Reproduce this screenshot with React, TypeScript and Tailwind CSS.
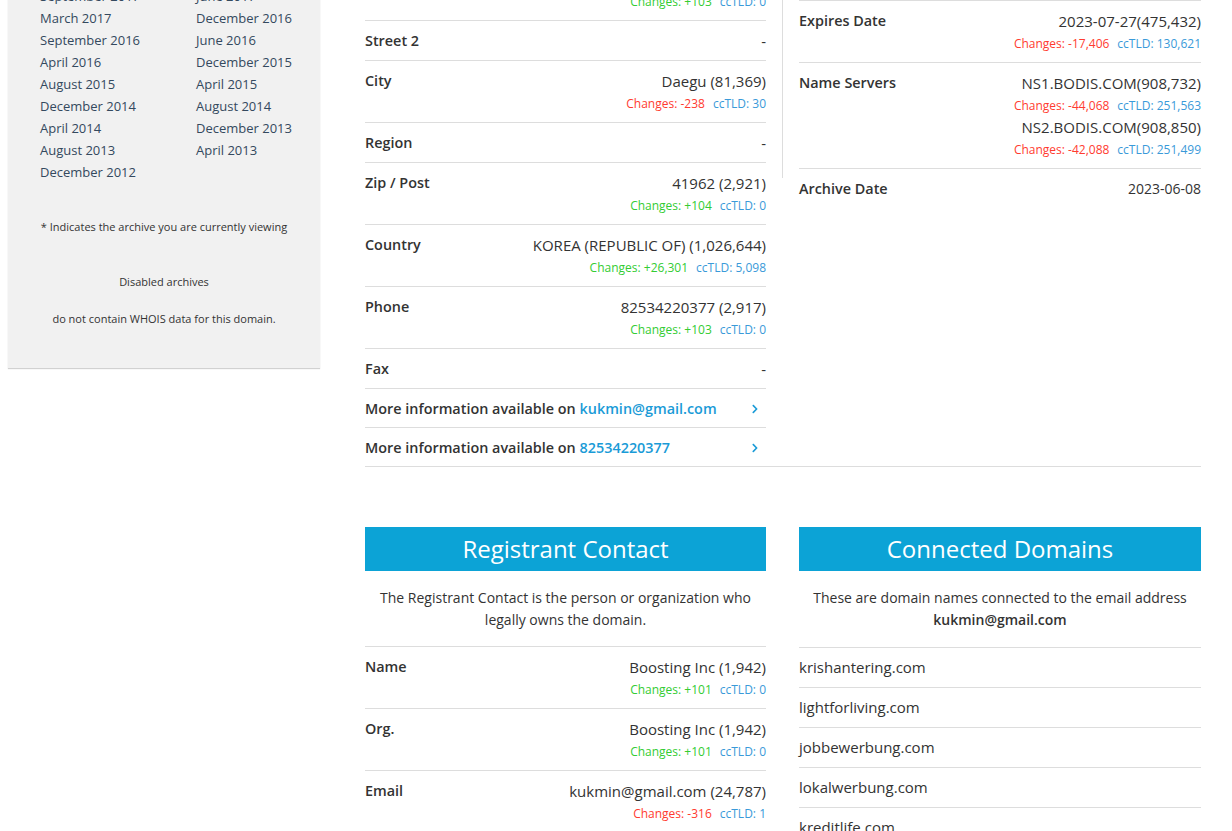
import React from "react";
import { FaChevronRight } from "react-icons/fa";

type Row = {
  label: string;
  value?: string;
  small?: boolean;
  values?: { v: string; ch: string; pos: boolean; cc: string }[];
  ch?: string;
  pos?: boolean;
  cc?: string;
};

function Changes({ ch, pos, cc }: { ch: string; pos: boolean; cc: string }) {
  return (
    <div className="mt-[2px] pt-[1px] text-[12px] leading-[20px]">
      <span className={pos ? "text-[#33cc33]" : "text-[#ff3b30]"}>Changes: {ch}</span>
      <span className="ml-[8px] text-[#3a9ad9]">ccTLD: {cc}</span>
    </div>
  );
}

function DataRow({ row }: { row: Row }) {
  const hasCh = !!row.ch || !!row.values;
  return (
    <div
      className={
        "flex justify-between border-t border-[#dddddd] pt-[10px] " + (hasCh ? "pb-[8px]" : "pb-[9px]")
      }
    >
      <div className="text-[14.4px] leading-[20px] font-semibold text-[#333]">{row.label}</div>
      <div className="text-right">
        {row.values ? (
          row.values.map((x, i) => (
            <div key={i} className={i > 0 ? "mt-[1px]" : ""}>
              <div className="text-[15px] leading-[20px] text-[#333]">{x.v}</div>
              <Changes ch={x.ch} pos={x.pos} cc={x.cc} />
            </div>
          ))
        ) : (
          <>
            <div className={(row.small ? "text-[14px]" : "text-[15px]") + " leading-[20px] text-[#333]"}>
              {row.value}
            </div>
            {row.ch && <Changes ch={row.ch} pos={!!row.pos} cc={row.cc || "0"} />}
          </>
        )}
      </div>
    </div>
  );
}

function MoreRow({ link }: { link: string }) {
  return (
    <div className="flex items-center justify-between border-t border-[#dddddd] pt-[10px] pb-[8px] pr-[6px]">
      <div className="text-[14.4px] leading-[20px] font-semibold text-[#333]">
        More information available on <span className="text-[#1a9bd7]">{link}</span>
      </div>
      <FaChevronRight className="text-[#1a9bd7]" size={10} />
    </div>
  );
}

const leftRows: Row[] = [
  { label: "Street", value: "Pil-dong 2-ga (2,910)", ch: "+103", pos: true, cc: "0" },
  { label: "Street 2", value: "-" },
  { label: "City", value: "Daegu (81,369)", ch: "-238", pos: false, cc: "30" },
  { label: "Region", value: "-" },
  { label: "Zip / Post", value: "41962 (2,921)", ch: "+104", pos: true, cc: "0" },
  { label: "Country", value: "KOREA (REPUBLIC OF) (1,026,644)", ch: "+26,301", pos: true, cc: "5,098" },
  { label: "Phone", value: "82534220377 (2,917)", ch: "+103", pos: true, cc: "0" },
  { label: "Fax", value: "-" },
];

const rightRows: Row[] = [
  { label: "Updated Date", value: "2022-07-28(312,114)", ch: "-12,201", pos: false, cc: "98,120" },
  { label: "Expires Date", value: "2023-07-27(475,432)", ch: "-17,406", pos: false, cc: "130,621" },
  {
    label: "Name Servers",
    values: [
      { v: "NS1.BODIS.COM(908,732)", ch: "-44,068", pos: false, cc: "251,563" },
      { v: "NS2.BODIS.COM(908,850)", ch: "-42,088", pos: false, cc: "251,499" },
    ],
  },
  { label: "Archive Date", value: "2023-06-08", small: true },
];

const archives: [string, string][] = [
  ["September 2017", "June 2017"],
  ["March 2017", "December 2016"],
  ["September 2016", "June 2016"],
  ["April 2016", "December 2015"],
  ["August 2015", "April 2015"],
  ["December 2014", "August 2014"],
  ["April 2014", "December 2013"],
  ["August 2013", "April 2013"],
  ["December 2012", ""],
];

const domains = [
  "krishantering.com",
  "lightforliving.com",
  "jobbewerbung.com",
  "lokalwerbung.com",
  "kreditlife.com",
  "mortgageplus.com",
];

export default function App() {
  return (
    <div
      className="h-[831px] overflow-hidden bg-white"
      style={{ fontFamily: '"Open Sans", "Noto Sans", sans-serif' }}
    >
      <div className="flex items-start pl-[8px]">
        {/* Sidebar */}
        <div className="mt-[-15px] w-[312px] shrink-0 bg-[#f1f1f1] shadow-[0_1px_1px_rgba(0,0,0,0.18)] pb-[41px]">
          <div className="grid grid-cols-[156px_1fr] pl-[32px] text-[13px] leading-[22px] text-[#34495e]">
            {archives.map(([a, b], i) => (
              <React.Fragment key={i}>
                <div>{a}</div>
                <div>{b}</div>
              </React.Fragment>
            ))}
          </div>
          <div className="mt-[36px] text-center text-[11px] leading-[16px] text-[#333]">
            * Indicates the archive you are currently viewing
          </div>
          <div className="mt-[39px] text-center text-[11px] leading-[16px] text-[#333]">
            Disabled archives
          </div>
          <div className="mt-[21px] text-center text-[11px] leading-[16px] text-[#333]">
            do not contain WHOIS data for this domain.
          </div>
        </div>

        {/* Main */}
        <div className="ml-[45px] w-[836px]">
          <div className="mt-[-42px] grid grid-cols-[401px_1px_402px] gap-x-[16px] border-b border-[#dddddd] items-start">
            <div>
              {leftRows.map((r, i) => (
                <DataRow key={i} row={r} />
              ))}
              <MoreRow link="kukmin@gmail.com" />
              <MoreRow link="82534220377" />
            </div>
            <div className="h-[220px] bg-[#dddddd]" />
            <div className="mt-[-20px]">
              {rightRows.map((r, i) => (
                <DataRow key={i} row={r} />
              ))}
            </div>
          </div>

          <div className="mt-[60px] grid grid-cols-[401px_402px] gap-x-[33px] items-start">
            {/* Registrant Contact */}
            <div>
              <div className="h-[44px] bg-[#0ca3d6] flex items-center justify-center text-white text-[24px]">
                Registrant Contact
              </div>
              <div className="mt-[16px] mb-[15px] px-[10px] text-center text-[14px] leading-[22px] text-[#333]">
                The Registrant Contact is the person or organization who legally owns the domain.
              </div>
              <DataRow row={{ label: "Name", value: "Boosting Inc (1,942)", ch: "+101", pos: true, cc: "0" }} />
              <DataRow row={{ label: "Org.", value: "Boosting Inc (1,942)", ch: "+101", pos: true, cc: "0" }} />
              <DataRow row={{ label: "Email", value: "kukmin@gmail.com (24,787)", ch: "-316", pos: false, cc: "1" }} />
            </div>

            {/* Connected Domains */}
            <div>
              <div className="h-[44px] bg-[#0ca3d6] flex items-center justify-center text-white text-[24px]">
                Connected Domains
              </div>
              <div className="mt-[16px] mb-[16px] text-center text-[14px] leading-[22px] text-[#333]">
                These are domain names connected to the email address
                <div className="font-semibold">kukmin@gmail.com</div>
              </div>
              {domains.map((d) => (
                <div
                  key={d}
                  className="border-t border-[#dddddd] pt-[9px] pb-[10px] text-[15px] leading-[20px] text-[#333]"
                >
                  {d}
                </div>
              ))}
            </div>
          </div>
        </div>
      </div>
    </div>
  );
}
